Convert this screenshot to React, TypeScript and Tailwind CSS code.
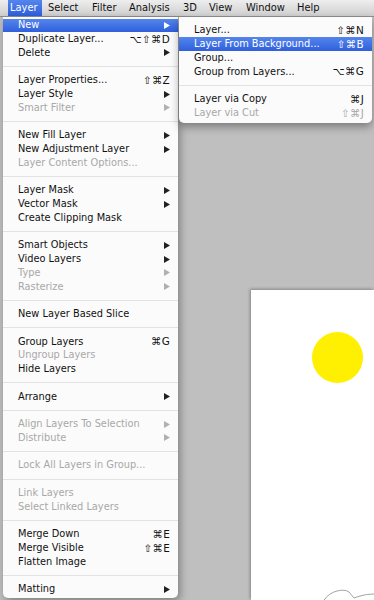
import React from 'react';

type Item =
  | { sep: true }
  | { label: string; key?: string; sub?: boolean; off?: boolean; hot?: boolean };

const S: Item = { sep: true };

const mainMenu: Item[] = [
  { label: 'New', sub: true, hot: true },
  { label: 'Duplicate Layer...', key: '⌥⇧⌘D' },
  { label: 'Delete', sub: true },
  S,
  { label: 'Layer Properties...', key: '⇧⌘Z' },
  { label: 'Layer Style', sub: true },
  { label: 'Smart Filter', sub: true, off: true },
  S,
  { label: 'New Fill Layer', sub: true },
  { label: 'New Adjustment Layer', sub: true },
  { label: 'Layer Content Options...', off: true },
  S,
  { label: 'Layer Mask', sub: true },
  { label: 'Vector Mask', sub: true },
  { label: 'Create Clipping Mask' },
  S,
  { label: 'Smart Objects', sub: true },
  { label: 'Video Layers', sub: true },
  { label: 'Type', sub: true, off: true },
  { label: 'Rasterize', sub: true, off: true },
  S,
  { label: 'New Layer Based Slice' },
  S,
  { label: 'Group Layers', key: '⌘G' },
  { label: 'Ungroup Layers', off: true },
  { label: 'Hide Layers' },
  S,
  { label: 'Arrange', sub: true },
  S,
  { label: 'Align Layers To Selection', sub: true, off: true },
  { label: 'Distribute', sub: true, off: true },
  S,
  { label: 'Lock All Layers in Group...', off: true },
  S,
  { label: 'Link Layers', off: true },
  { label: 'Select Linked Layers', off: true },
  S,
  { label: 'Merge Down', key: '⌘E' },
  { label: 'Merge Visible', key: '⇧⌘E' },
  { label: 'Flatten Image' },
  S,
  { label: 'Matting', sub: true },
];

const newMenu: Item[] = [
  { label: 'Layer...', key: '⇧⌘N' },
  { label: 'Layer From Background...', key: '⇧⌘B', hot: true },
  { label: 'Group...' },
  { label: 'Group from Layers...', key: '⌥⌘G' },
  S,
  { label: 'Layer via Copy', key: '⌘J' },
  { label: 'Layer via Cut', key: '⇧⌘J', off: true },
];

const bar = [
  { label: 'Layer', w: 'w-[34px] pl-[2px]', hot: true },
  { label: 'Select', w: 'w-[46px] pl-[6px]' },
  { label: 'Filter', w: 'w-[37px] pl-[4px]' },
  { label: 'Analysis', w: 'w-[54px] pl-[4px]' },
  { label: '3D', w: 'w-[26px] pl-[4px]' },
  { label: 'View', w: 'w-[37px] pl-[4px]' },
  { label: 'Window', w: 'w-[51px] pl-[4px]' },
  { label: 'Help', w: 'w-[40px] pl-[4px]' },
];

const Arrow = ({ color }: { color: string }) => (
  <svg width="6" height="7" viewBox="0 0 6 7" className="shrink-0">
    <path d="M0 0 L6 3.5 L0 7 Z" fill={color} />
  </svg>
);

const Menu = ({ items, pl }: { items: Item[]; pl: string }) => (
  <>
    {items.map((it, i) => {
      if ('sep' in it) {
        return (
          <div key={i} className="h-[13.75px] flex items-center">
            <div className="h-px w-full bg-[#e2e2e2]" />
          </div>
        );
      }
      const tone = it.hot
        ? 'bg-gradient-to-b from-[#5585ec] to-[#2f5fdc] text-white'
        : it.off
          ? 'text-[#a8a8a8]'
          : 'text-[#111]';
      return (
        <div key={i} className={`h-[13.75px] flex items-center justify-between ${pl} ${tone}`}>
          <span className="whitespace-nowrap">{it.label}</span>
          {it.key && <span className="whitespace-nowrap text-[10.4px] tracking-[0.3px]">{it.key}</span>}
          {it.sub && <Arrow color={it.hot ? '#fff' : it.off ? '#b0b0b0' : '#222'} />}
        </div>
      );
    })}
  </>
);

export default function App() {
  return (
    <div className="relative w-[374px] h-[600px] overflow-hidden bg-[#bfbfbf] font-['DejaVu_Sans',sans-serif] text-[9.8px] leading-none">
      {/* menu bar */}
      <div className="h-[17px] flex items-stretch pl-[8px] bg-gradient-to-b from-[#eeeeee] to-[#cfcfcf] border-b border-[#8f8f8f] text-[9.9px] text-[#111]">
        {bar.map((b) => (
          <div
            key={b.label}
            className={`${b.w} shrink-0 flex items-center ${b.hot ? 'bg-gradient-to-b from-[#5585ec] to-[#2f5fdc] text-white' : ''}`}
          >
            {b.label}
          </div>
        ))}
      </div>

      {/* document */}
      <div className="absolute left-[251px] top-[290px] right-0 bottom-0 bg-white shadow-[-1px_-1px_3px_rgba(0,0,0,0.3)]">
        <div className="absolute left-[61px] top-[42px] w-[51px] h-[51px] rounded-full bg-[#ffef00]" />
        <svg className="absolute left-0 top-0" width="123" height="310" viewBox="0 0 123 310">
          <path
            d="M73 310 Q78 303 86 301 Q94 299 98 302 L103 308 L109 306 Q115 304 123 304"
            fill="none"
            stroke="#9a9a9a"
            strokeWidth="0.9"
          />
        </svg>
      </div>

      {/* Layer menu */}
      <div className="absolute left-[3px] top-[17px] w-[175px] pt-[1.5px] pb-[2px] bg-[#fbfbfb] rounded-b-[5px] shadow-[2px_3px_8px_rgba(0,0,0,0.35)]">
        <Menu items={mainMenu} pl="pl-[15px] pr-[8px]" />
      </div>

      {/* New submenu */}
      <div className="absolute left-[179px] top-[17px] w-[193px] pt-[6.5px] pb-[3px] bg-[#fbfbfb] rounded-b-[5px] shadow-[0_4px_8px_rgba(0,0,0,0.35)]">
        <Menu items={newMenu} pl="pl-[15px] pr-[8px]" />
      </div>
    </div>
  );
}
